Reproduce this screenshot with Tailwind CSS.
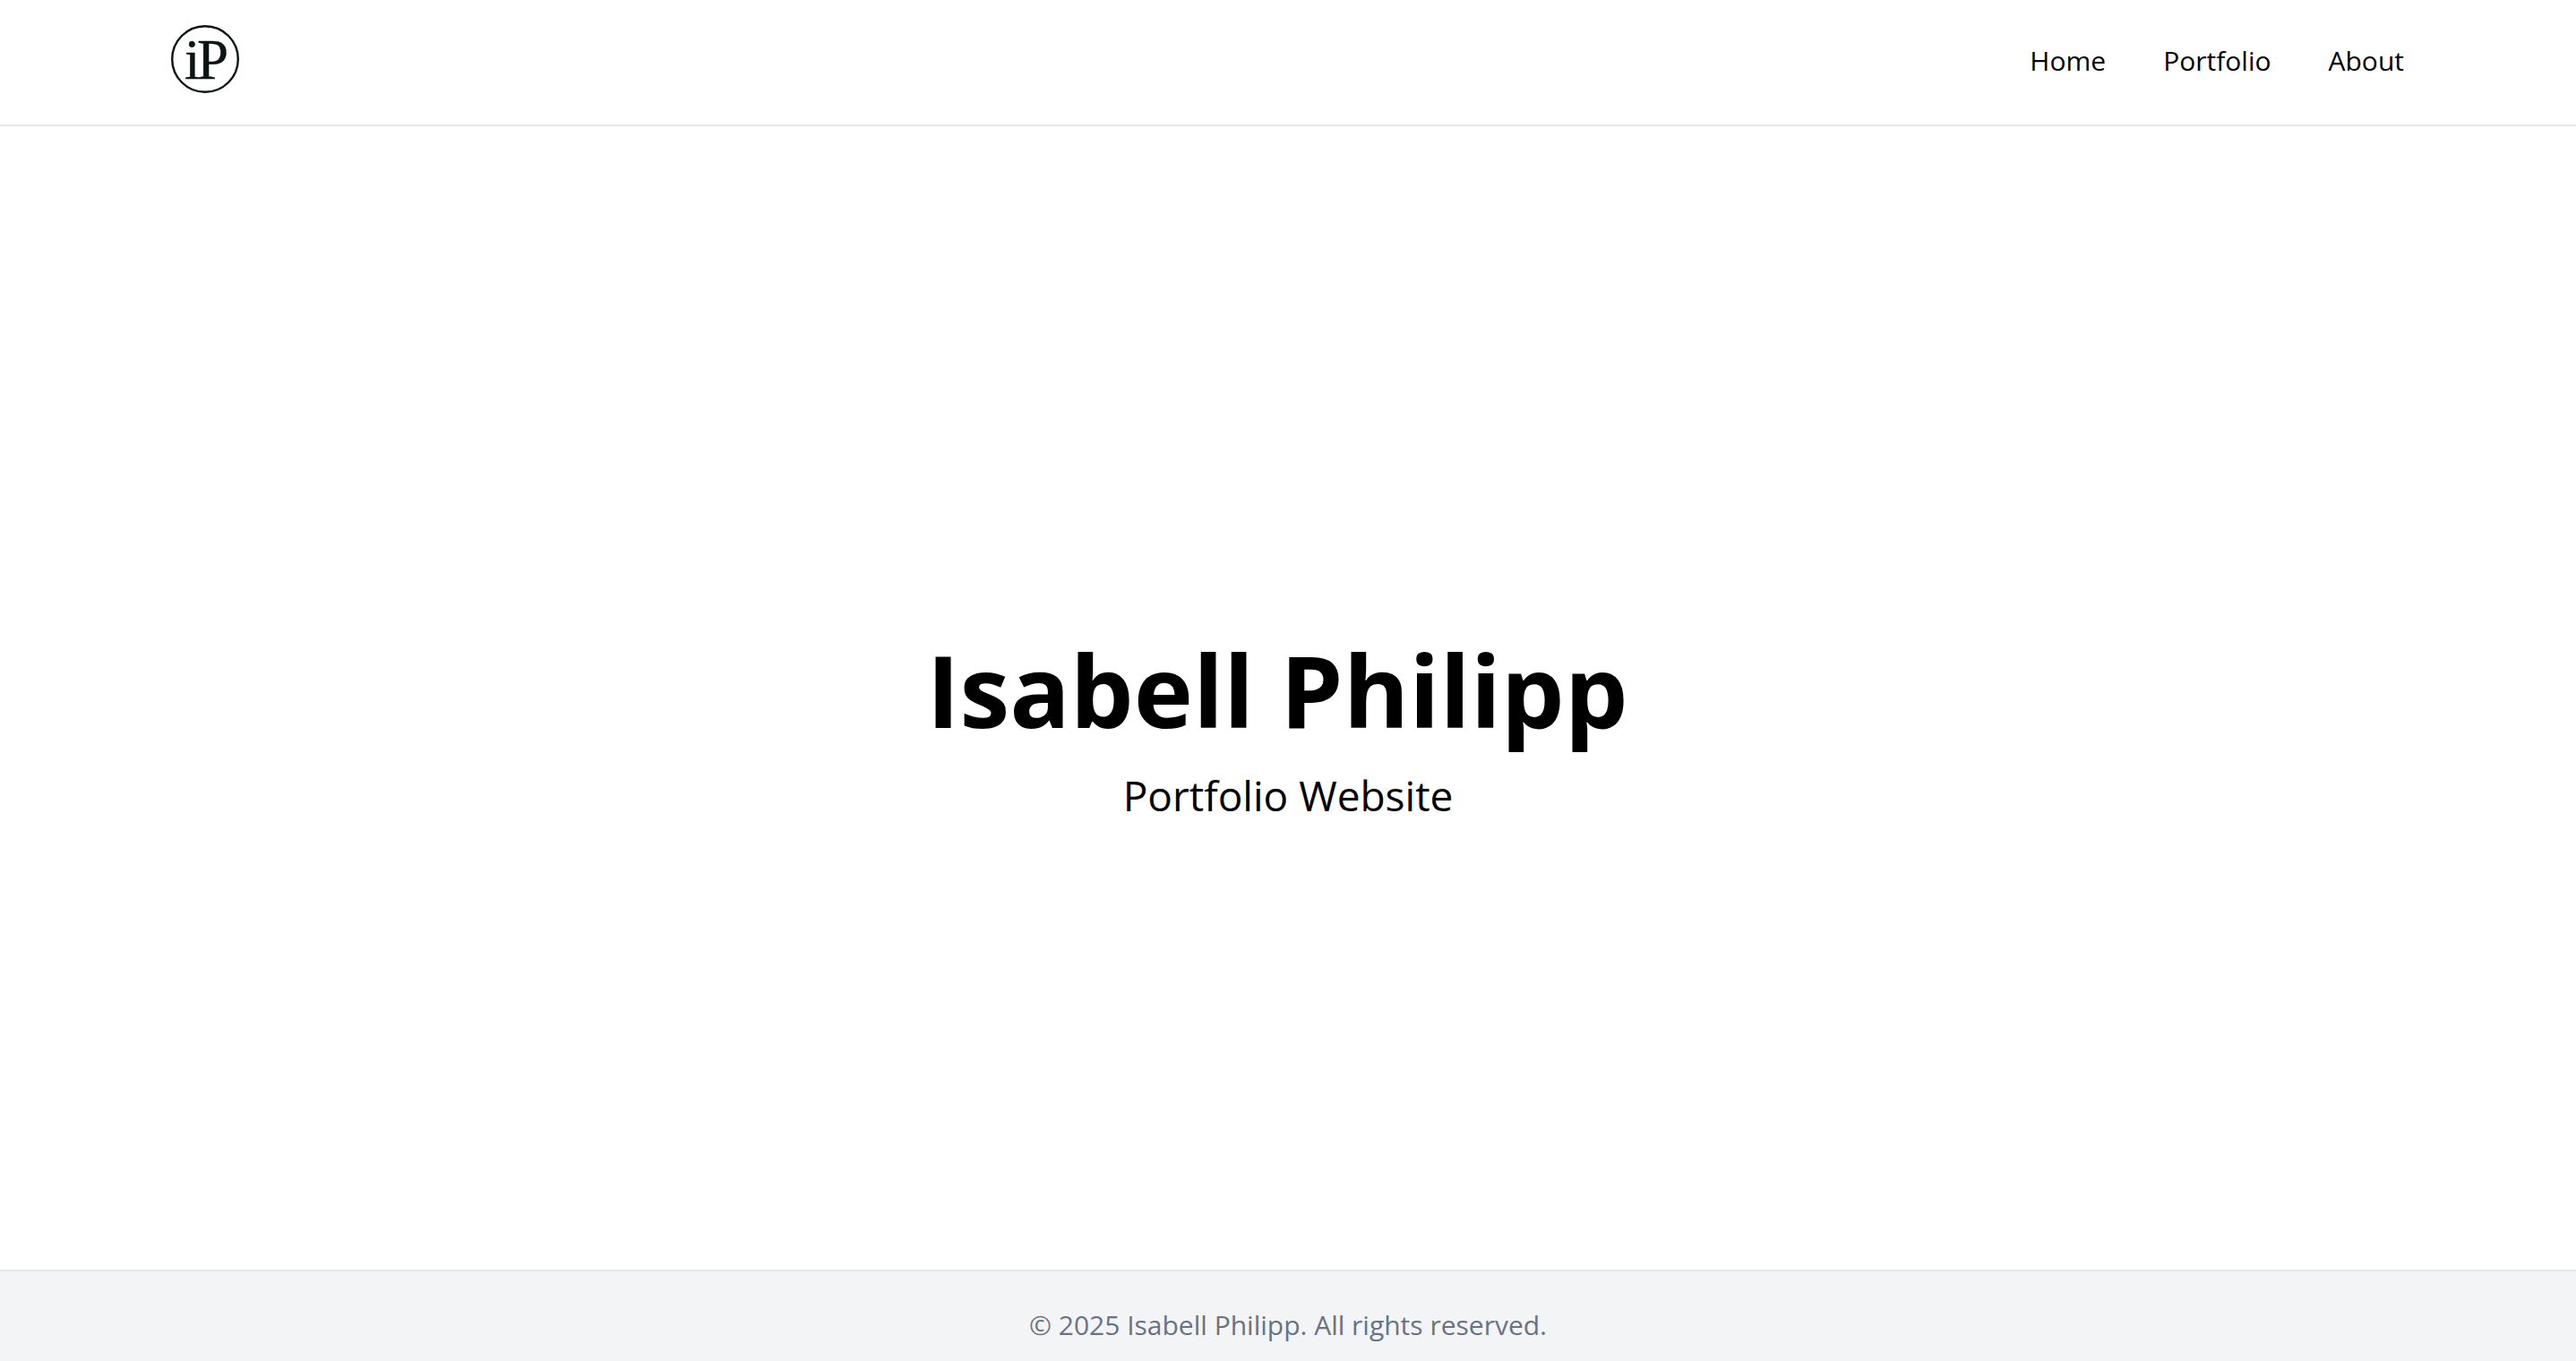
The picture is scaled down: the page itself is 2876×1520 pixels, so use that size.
<!DOCTYPE html>
<html lang="en">
<head>
<meta charset="UTF-8">
<meta name="viewport" content="width=device-width, initial-scale=1">
<title>Isabell Philipp</title>
<script src="https://cdn.jsdelivr.net/npm/@tailwindcss/browser@4"></script>
</head>
<body class="flex min-h-screen flex-col bg-white font-['Open_Sans',sans-serif] text-black">
<header class="border-b-2 border-gray-200">
  <nav class="flex items-center justify-between px-48 pt-7 pb-[31px]" aria-label="Main">
    <a href="#" aria-label="Isabell Philipp, home" class="block">
      <svg class="size-20 overflow-visible" viewBox="0 0 80 80" aria-hidden="true">
        <circle cx="37" cy="38" r="36.8" fill="none" stroke="#0d1414" stroke-width="2.4"/>
        <text x="14" y="60" font-family="Liberation Serif, serif" font-size="63" fill="#0d1414" stroke="#0d1414" stroke-width=".4">i</text>
        <text x="28" y="60" font-family="Liberation Serif, serif" font-size="63" fill="#0d1414" stroke="#0d1414" stroke-width=".4">P</text>
      </svg>
    </a>
    <ul class="flex gap-16 text-[30px] leading-12">
      <li><a href="#">Home</a></li>
      <li><a href="#">Portfolio</a></li>
      <li><a href="#">About</a></li>
    </ul>
  </nav>
</header>
<main class="flex flex-1 flex-col items-center justify-center gap-5 pt-16">
  <h1 class="pr-6 text-[112px] leading-[132px] font-bold">Isabell Philipp</h1>
  <p class="text-[46px] leading-16">Portfolio Website</p>
</main>
<footer class="border-t-2 border-gray-200 bg-gray-100 pt-9 pb-4 text-center text-[30px] leading-12 text-gray-500">
  <p>© 2025 Isabell Philipp. All rights reserved.</p>
</footer>
</body>
</html>
